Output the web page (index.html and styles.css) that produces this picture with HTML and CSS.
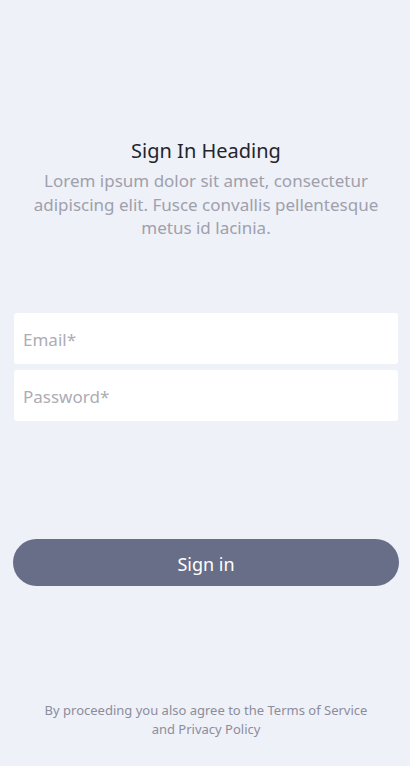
FILE: index.html
```html
<!DOCTYPE html>
<html>
<head>
<meta charset="utf-8">
<link rel="stylesheet" href="styles.css">
</head>
<body>
<main class="page">
  <section class="intro">
    <h1 class="title">Sign In Heading</h1>
    <p class="lead">Lorem ipsum dolor sit amet, consectetur adipiscing elit. Fusce convallis pellentesque metus id lacinia.</p>
  </section>
  <form class="fields">
    <input class="field" type="email" placeholder="Email*">
    <input class="field" type="password" placeholder="Password*">
  </form>
  <button class="submit" type="button">Sign in</button>
  <p class="legal">By proceeding you also agree to the Terms of Service and Privacy Policy</p>
</main>
</body>
</html>
```

FILE: styles.css
```css
html, body {
  margin: 0;
  padding: 0;
  background: #eef1f8;
}
body {
  font-family: "Noto Sans", "Open Sans", sans-serif;
}
.page {
  height: 766px;
  box-sizing: border-box;
  display: flex;
  flex-direction: column;
  padding: 137px 12px 0 14px;
}
.intro {
  text-align: center;
  padding: 0 18px;
}
.title {
  margin: 0;
  font-size: 20px;
  font-weight: 400;
  line-height: 28px;
  color: #24242c;
}
.lead {
  margin: 4px 0 0;
  font-size: 17px;
  line-height: 23.5px;
  color: #9fa0ac;
}
.fields {
  display: flex;
  flex-direction: column;
  gap: 6px;
  margin-top: 73px;
}
.field {
  height: 51px;
  box-sizing: border-box;
  border: none;
  border-radius: 3px;
  background: #fff;
  padding: 2px 9px 0;
  font-family: inherit;
  font-size: 17px;
  color: #333;
  outline: none;
}
.field::placeholder {
  color: #acacb5;
}
.submit {
  margin: 118px -1px 0 -1px;
  height: 47px;
  padding: 4px 0 0;
  border: none;
  border-radius: 24px;
  background: #686e87;
  color: #fff;
  font-family: inherit;
  font-size: 18px;
}
.legal {
  margin: 115px 0 0;
  text-align: center;
  font-size: 13px;
  line-height: 19px;
  color: #8c8d9c;
  padding: 0 20px;
}
```
